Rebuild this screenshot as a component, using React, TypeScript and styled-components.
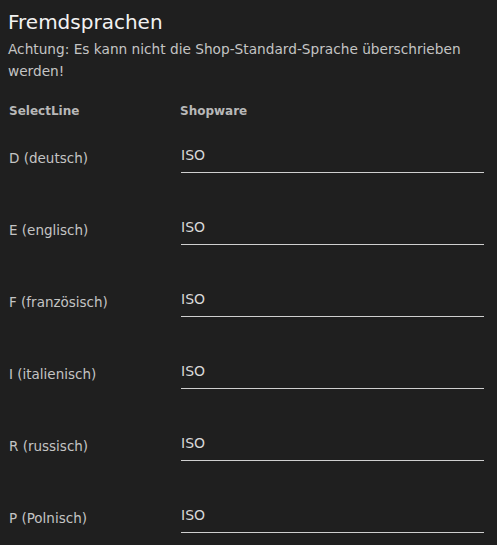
import React from 'react'
import styled, { createGlobalStyle } from 'styled-components'

const GlobalStyle = createGlobalStyle`
    html, body {
        margin: 0;
        padding: 0;
        background: #1f1f1f;
    }
    body {
        font-family: "DejaVu Sans", "Liberation Sans", sans-serif;
        color: #d4d4d4;
    }
`

const Panel = styled.div`
    width: 497px;
    height: 545px;
    overflow: hidden;
    box-sizing: border-box;
    padding: 8px 13px 0 8px;
    background: #1f1f1f;
`

const Title = styled.h2`
    margin: 0;
    font-size: 20px;
    font-weight: normal;
    line-height: 28px;
    color: #f2f2f2;
`

const Notice = styled.p`
    margin: 2px 0 0;
    font-size: 13.7px;
    line-height: 22px;
    color: #c4c4c4;
`

const Columns = styled.div`
    display: grid;
    grid-template-columns: 172px 1fr;
`

const HeaderRow = styled(Columns)`
    margin-top: 20px;
    margin-bottom: 5px;
`

const HeadCell = styled.div<{ $first?: boolean }>`
    font-size: 12px;
    font-weight: bold;
    color: #b8b8b8;
    line-height: 18px;
    padding-left: ${p => (p.$first ? '1px' : '0')};
`

const Rows = styled.div`
    display: flex;
    flex-direction: column;
    gap: 24px;
`

const LangRow = styled(Columns)`
    height: 48px;
    align-items: end;
`

const Label = styled.div`
    padding: 0 0 6px 1px;
    font-size: 13.5px;
    line-height: 18px;
    color: #c4c4c4;
`

const TextInput = styled.input`
    display: block;
    width: calc(100% - 1px);
    box-sizing: border-box;
    height: 29px;
    padding: 0 0 6px;
    margin: 0 0 0 1px;
    border: none;
    border-bottom: 1px solid #cfcfcf;
    background: transparent;
    font-family: inherit;
    font-size: 14px;
    color: #d8d8d8;
    outline: none;
`

const languages = [
    'D (deutsch)',
    'E (englisch)',
    'F (französisch)',
    'I (italienisch)',
    'R (russisch)',
    'P (Polnisch)',
]

const App = () => {
    return (
        <Panel>
            <GlobalStyle />
            <Title>Fremdsprachen</Title>
            <Notice>Achtung: Es kann nicht die Shop-Standard-Sprache überschrieben werden!</Notice>
            <HeaderRow>
                <HeadCell $first>SelectLine</HeadCell>
                <HeadCell>Shopware</HeadCell>
            </HeaderRow>
            <Rows>
                {languages.map(lang => (
                    <LangRow key={lang}>
                        <Label>{lang}</Label>
                        <TextInput defaultValue="ISO" />
                    </LangRow>
                ))}
            </Rows>
        </Panel>
    )
}

export default App
